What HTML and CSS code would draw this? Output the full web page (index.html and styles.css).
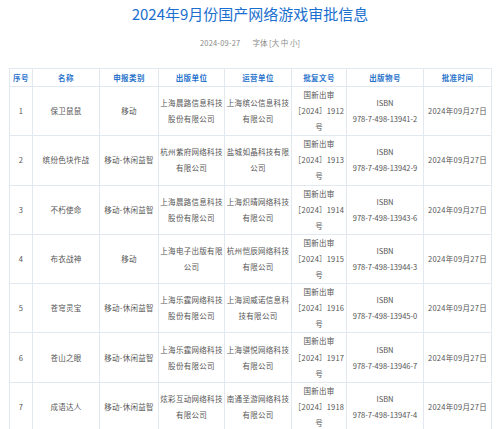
FILE: index.html
```html
<!DOCTYPE html>
<html lang="zh-CN">
<head>
<meta charset="utf-8">
<title>2024年9月份国产网络游戏审批信息</title>
<link rel="stylesheet" href="styles.css">
</head>
<body>
<div class="page">
  <h1 class="title">2024年9月份国产网络游戏审批信息</h1>
  <div class="meta"><span class="date">2024-09-27</span><span class="fontsize">字体 [大 中 小]</span></div>
  <table class="grid">
    <colgroup>
      <col class="c1"><col class="c2"><col class="c3"><col class="c4"><col class="c5"><col class="c6"><col class="c7"><col class="c8">
    </colgroup>
    <thead>
      <tr><th>序号</th><th>名称</th><th>申报类别</th><th>出版单位</th><th>运营单位</th><th>批复文号</th><th>出版物号</th><th>批准时间</th></tr>
    </thead>
    <tbody>
      <tr><td>1</td><td>保卫鼠鼠</td><td>移动</td><td>上海晨路信息科技股份有限公司</td><td>上海缤公信息科技有限公司</td><td>国新出审<br>［2024］1912<br>号</td><td>ISBN<br>978-7-498-13941-2</td><td>2024年09月27日</td></tr>
      <tr><td>2</td><td>缤纷色块作战</td><td>移动-休闲益智</td><td>杭州紫府网络科技有限公司</td><td>盐城如晶科技有限公司</td><td>国新出审<br>［2024］1913<br>号</td><td>ISBN<br>978-7-498-13942-9</td><td>2024年09月27日</td></tr>
      <tr><td>3</td><td>不朽使命</td><td>移动-休闲益智</td><td>上海晨路信息科技股份有限公司</td><td>上海炽晴网络科技有限公司</td><td>国新出审<br>［2024］1914<br>号</td><td>ISBN<br>978-7-498-13943-6</td><td>2024年09月27日</td></tr>
      <tr><td>4</td><td>布衣战神</td><td>移动</td><td>上海电子出版有限公司</td><td>杭州恺辰网络科技有限公司</td><td>国新出审<br>［2024］1915<br>号</td><td>ISBN<br>978-7-498-13944-3</td><td>2024年09月27日</td></tr>
      <tr><td>5</td><td>苍穹灵宝</td><td>移动-休闲益智</td><td>上海乐霆网络科技股份有限公司</td><td>上海润威诺信息科技有限公司</td><td>国新出审<br>［2024］1916<br>号</td><td>ISBN<br>978-7-498-13945-0</td><td>2024年09月27日</td></tr>
      <tr><td>6</td><td>苍山之眼</td><td>移动-休闲益智</td><td>上海乐霆网络科技股份有限公司</td><td>上海骐悦网络科技有限公司</td><td>国新出审<br>［2024］1917<br>号</td><td>ISBN<br>978-7-498-13946-7</td><td>2024年09月27日</td></tr>
      <tr><td>7</td><td>成语达人</td><td>移动-休闲益智</td><td>炫彩互动网络科技有限公司</td><td>南通圣游网络科技有限公司</td><td>国新出审<br>［2024］1918<br>号</td><td>ISBN<br>978-7-498-13947-4</td><td>2024年09月27日</td></tr>
    </tbody>
  </table>
</div>
</body>
</html>
```
FILE: styles.css
```css
html, body {
  margin: 0;
  padding: 0;
  background: #ffffff;
}
body {
  font-family: "Noto Sans CJK SC", "Noto Sans", sans-serif;
  color: #555555;
}
.page {
  padding: 0 9px 0 9px;
}
.title {
  margin: 0;
  padding-top: 3px;
  height: 21px;
  line-height: 21px;
  font-size: 15px;
  font-weight: normal;
  color: #1a6fcf;
  text-align: center;
}
.meta {
  display: flex;
  justify-content: center;
  gap: 12px;
  padding-top: 13px;
  height: 12px;
  line-height: 12px;
  font-size: 7.5px;
  color: #8a8a8a;
  margin-bottom: 19px;
}
.date {
  letter-spacing: 0.2px;
}
.grid {
  width: 482px;
  border-collapse: collapse;
  table-layout: fixed;
  font-size: 7.5px;
}
.c1 { width: 23px; }
.c2 { width: 67px; }
.c3 { width: 59px; }
.c4 { width: 66px; }
.c5 { width: 67px; }
.c6 { width: 55px; }
.c7 { width: 77px; }
.c8 { width: 68px; }
.grid th, .grid td {
  border: 1px solid #e2e8ef;
  text-align: center;
  vertical-align: middle;
  padding: 0;
}
.grid th {
  height: 17px;
  line-height: 17px;
  color: #2a74cc;
  font-weight: bold;
  letter-spacing: 0.4px;
}
.grid td {
  height: 48.3px;
  line-height: 16.1px;
  letter-spacing: 0.3px;
  color: #555555;
  word-break: break-all;
}
.grid td:nth-child(6) {
  letter-spacing: 0.2px;
  white-space: nowrap;
}
.grid td:nth-child(7) {
  letter-spacing: 0;
}
```
